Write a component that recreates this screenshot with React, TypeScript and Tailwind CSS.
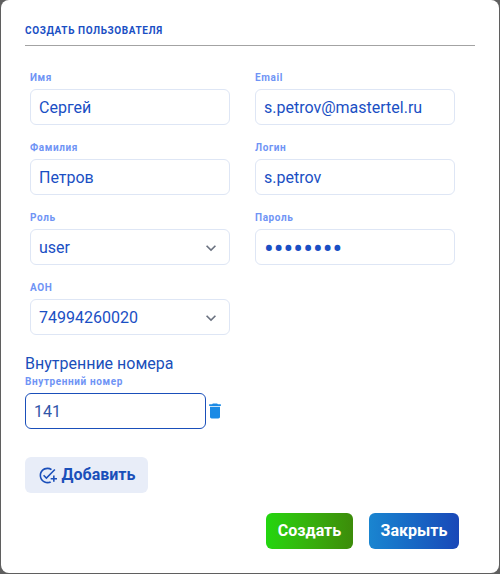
import { MdDelete, MdOutlineAddTask, MdKeyboardArrowDown } from "react-icons/md"

interface FieldProps {
    label: string
    value: string
    type?: string
    select?: boolean
}

function Field({ label, value, type = "text", select = false }: FieldProps) {
    const isPassword = type === "password"
    return (
        <div className="flex flex-col">
            <label className="h-[12px] mb-[5px] text-[10px] leading-[12px] font-bold tracking-[0.6px] text-[#6f94f5]">{label}</label>
            <div className="relative">
                <input
                    readOnly
                    type={type}
                    value={value}
                    className={
                        isPassword
                            ? "block w-[200px] h-[36px] px-[8px] pt-[5px] rounded-[6px] border border-[#dee6f5] bg-white text-[29px] text-[#1a4fc4] outline-none"
                            : "block w-[200px] h-[36px] px-[8px] rounded-[6px] border border-[#dee6f5] bg-white text-[16px] text-[#1a4fc4] outline-none"
                    }
                />
                {select && <MdKeyboardArrowDown className="absolute right-[9px] top-[9px] text-[#6b7280]" size={20} />}
            </div>
        </div>
    )
}

export default function App() {
    return (
        <div className="h-[574px] w-[500px] bg-[#5f5f5f] pl-px pr-px pb-px font-['Roboto',sans-serif]">
            <div className="h-full bg-white rounded-[8px] pt-[24px] px-[24px] flex flex-col">
                <h2 className="h-[13px] text-[10px] leading-[13px] font-bold uppercase tracking-[0.6px] text-[#1a4fc4]">Создать пользователя</h2>
                <div className="mt-[8px] h-px w-[450px] bg-[#a3a3a3]" />

                {/* Form grid */}
                <div className="mt-[26px] ml-[5px] grid grid-cols-[200px_200px] gap-x-[25px] gap-y-[17px]">
                    <Field label="Имя" value="Сергей" />
                    <Field label="Email" value="s.petrov@mastertel.ru" />
                    <Field label="Фамилия" value="Петров" />
                    <Field label="Логин" value="s.petrov" />
                    <Field label="Роль" value="user" select />
                    <Field label="Пароль" value="12345678" type="password" />
                    <Field label="АОН" value="74994260020" select />
                </div>

                <h3 className="mt-[17px] h-[24px] text-[16px] leading-[24px] text-[#1a4fba]">Внутренние номера</h3>
                <div className="h-[12px] text-[10px] leading-[12px] font-bold tracking-[0.6px] text-[#6f94f5]">Внутренний номер</div>
                <div className="mt-[5px] flex items-center">
                    <input
                        readOnly
                        value="141"
                        className="block w-[181px] h-[36px] px-[8px] rounded-[6px] border border-[#1a4fba] bg-white text-[16px] text-[#2f55a8] outline-none"
                    />
                    <MdDelete className="-ml-px text-[#1a8ae5]" size={20} />
                </div>

                <button className="mt-[28px] w-[123px] h-[36px] flex items-center justify-center gap-[5px] rounded-[6px] bg-[#e8edf8] text-[16px] font-bold text-[#1a4fba]">
                    <MdOutlineAddTask size={19} />
                    Добавить
                </button>

                <div className="mt-[20px] flex gap-[16px] pl-[241px]">
                    <button className="w-[87px] h-[36px] rounded-[6px] bg-gradient-to-r from-[#22d60f] to-[#3c8c0a] text-[16px] font-bold text-white">Создать</button>
                    <button className="w-[90px] h-[36px] rounded-[6px] bg-gradient-to-r from-[#1a85d0] to-[#1a48b8] text-[16px] font-bold text-white">Закрыть</button>
                </div>
            </div>
        </div>
    )
}
